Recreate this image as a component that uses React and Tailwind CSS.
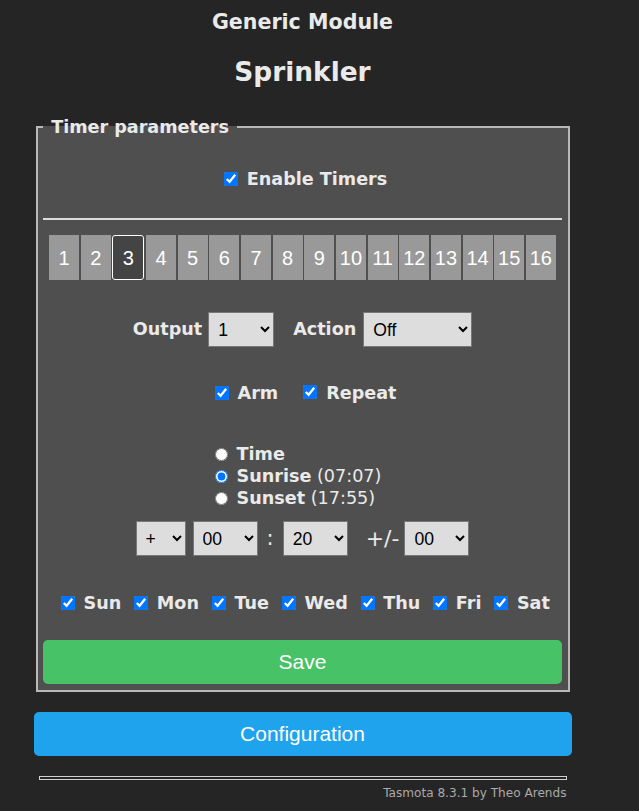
import React, { useState } from 'react';

const days = ['Sun', 'Mon', 'Tue', 'Wed', 'Thu', 'Fri', 'Sat'];

const Check = ({ checked = true }) => (
  <input type="checkbox" defaultChecked={checked} className="m-0 w-[14px] h-[14px] shrink-0" />
);

const Select = ({ value, options, width }) => (
  <select
    defaultValue={value}
    className={`${width} h-[35px] bg-[#dddddd] text-black border border-[#777] px-[5px] text-[17.6px] font-normal font-['Liberation_Sans',Arial,sans-serif]`}
  >
    {options.map((o) => (
      <option key={o} value={o}>{o}</option>
    ))}
  </select>
);

const App = () => {
  const [timer, setTimer] = useState(3);
  const [mode, setMode] = useState('sunrise');

  return (
    <div className="min-h-screen w-full bg-[#252525] text-[#eaeaea] font-['DejaVu_Sans',Verdana,sans-serif] text-[17.6px]">
      <div className="w-[605px] flex flex-col items-center">
        {/* Header */}
        <h3 className="mt-[10px] h-[24px] leading-[24px] text-[20.6px] font-bold">Generic Module</h3>
        <h2 className="mt-[22px] h-[31px] leading-[31px] text-[26.4px] font-bold">Sprinkler</h2>

        <div className="w-[538px] mt-[29px]">
          <fieldset className="mx-[2px] border-2 border-[#b8b8b8] bg-[#4f4f4f] px-[5.5px] pb-[6px]">
            <legend className="px-[2px] font-bold leading-[22px]">{'\u00a0Timer parameters\u00a0'}</legend>

            {/* Enable */}
            <div className="mt-[30px] h-[22px] flex items-center justify-center gap-[9px] font-bold pl-[6px]">
              <Check />
              <span>Enable Timers</span>
            </div>

            <div className="mt-[28px] h-[2px] bg-[#dcdcdc]" />

            {/* Timer tabs */}
            <div className="mt-[15px] mx-[6px] flex gap-[1.6px]">
              {Array.from({ length: 16 }, (_, i) => i + 1).map((n) => (
                <button
                  key={n}
                  onClick={() => setTimer(n)}
                  className={`flex-1 h-[45px] text-[20px] text-white font-['Liberation_Sans',Arial,sans-serif] ${
                    timer === n ? 'bg-[#444] border border-white rounded-[3px]' : 'bg-[#999]'
                  }`}
                >
                  {n}
                </button>
              ))}
            </div>

            {/* Output / Action */}
            <div className="mt-[32px] flex items-center justify-center font-bold">
              <span>Output</span>
              <span className="ml-[6px]"><Select value="1" options={['1', '2', '3', '4']} width="w-[66px]" /></span>
              <span className="ml-[19px]">Action</span>
              <span className="ml-[7px]"><Select value="Off" options={['Off', 'On', 'Toggle', 'Rule']} width="w-[109px]" /></span>
            </div>

            {/* Arm / Repeat */}
            <div className="mt-[35px] h-[22px] flex items-center justify-center font-bold pl-[6px]">
              <Check />
              <span className="ml-[9px]">Arm</span>
              <span className="ml-[25px]"><Check /></span>
              <span className="ml-[9px]">Repeat</span>
            </div>

            {/* Mode */}
            <div className="mt-[39px] flex justify-center pr-[9px]">
              <div className="flex flex-col leading-[22px]">
                {[
                  ['time', 'Time', ''],
                  ['sunrise', 'Sunrise', ' (07:07)'],
                  ['sunset', 'Sunset', ' (17:55)'],
                ].map(([k, label, t]) => (
                  <label key={k} className="h-[22px] flex items-center">
                    <input
                      type="radio"
                      name="mode"
                      checked={mode === k}
                      onChange={() => setMode(k)}
                      className="m-0 w-[13px] h-[13px]"
                    />
                    <span className="ml-[9px] whitespace-pre">
                      <b>{label}</b>{t}
                    </span>
                  </label>
                ))}
              </div>
            </div>

            {/* Offset */}
            <div className="mt-[12px] flex items-center justify-center">
              <Select value="+" options={['+', '-']} width="w-[50px]" />
              <span className="ml-[7px]"><Select value="00" options={['00', '01', '02', '03']} width="w-[65px]" /></span>
              <span className="ml-[9px] text-[21px]">:</span>
              <span className="ml-[9px]"><Select value="20" options={['00', '10', '20', '30']} width="w-[65px]" /></span>
              <span className="ml-[18px] text-[22px]">+/-</span>
              <span className="ml-[5px]"><Select value="00" options={['00', '15', '30']} width="w-[65px]" /></span>
            </div>

            {/* Days */}
            <div className="mt-[36px] h-[22px] flex items-center justify-center font-bold pl-[6px]">
              {days.map((d, i) => (
                <span key={d} className={`flex items-center ${i ? 'ml-[13px]' : ''}`}>
                  <Check />
                  <span className="ml-[8.5px]">{d}</span>
                </span>
              ))}
            </div>

            <button className="mt-[26px] w-full h-[44px] rounded-[5px] bg-[#47c266] text-white text-[21px] font-['Liberation_Sans',Arial,sans-serif]">
              Save
            </button>
          </fieldset>

          <button className="mt-[20px] w-full h-[44px] rounded-[5px] bg-[#1fa3ec] text-white text-[21px] font-['Liberation_Sans',Arial,sans-serif]">
            Configuration
          </button>

          <div className="mx-[5px] mt-[20px] h-[4px] border border-[#d0d0d0]" />
          <div className="mx-[5px] mt-[4px] text-right text-[12.1px] text-[#aaa]">Tasmota 8.3.1 by Theo Arends</div>
        </div>
      </div>
    </div>
  );
};

export default App;
